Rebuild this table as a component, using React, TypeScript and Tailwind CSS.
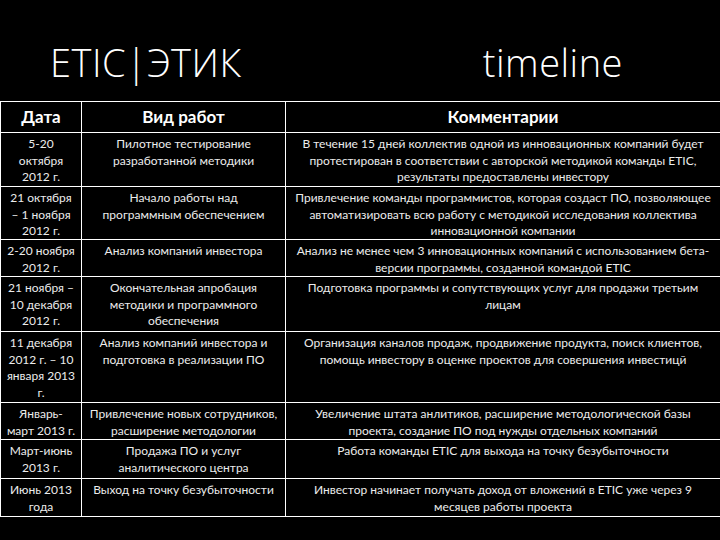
import React from "react";

type Row = { h: string; d: string[]; w: string[]; c: string[] };

const rows: Row[] = [
  {
    h: "h-[54px]",
    d: ["5-20", "октября", "2012 г."],
    w: ["Пилотное тестирование", "разработанной методики"],
    c: [
      "В течение 15 дней коллектив одной из инновационных компаний будет",
      "протестирован в соответствии с авторской методикой команды ETIC,",
      "результаты предоставлены инвестору",
    ],
  },
  {
    h: "h-[53px]",
    d: ["21 октября", "– 1 ноября", "2012 г."],
    w: ["Начало работы над", "программным обеспечением"],
    c: [
      "Привлечение команды программистов, которая создаст ПО, позволяющее",
      "автоматизировать всю работу с методикой исследования коллектива",
      "инновационной компании",
    ],
  },
  {
    h: "h-[37px]",
    d: ["2-20 ноября", "2012 г."],
    w: ["Анализ компаний инвестора"],
    c: [
      "Анализ не менее чем 3 инновационных компаний с использованием бета-",
      "версии программы, созданной командой ETIC",
    ],
  },
  {
    h: "h-[55px]",
    d: ["21 ноября –", "10 декабря", "2012 г."],
    w: ["Окончательная апробация", "методики и программного", "обеспечения"],
    c: ["Подготовка программы и сопутствующих услуг для продажи третьим", "лицам"],
  },
  {
    h: "h-[71px]",
    d: ["11 декабря", "2012 г. – 10", "января 2013", "г."],
    w: ["Анализ компаний инвестора и", "подготовка в реализации ПО"],
    c: [
      "Организация каналов продаж, продвижение продукта, поиск клиентов,",
      "помощь инвестору в оценке проектов для совершения инвестицй",
    ],
  },
  {
    h: "h-[37px]",
    d: ["Январь-", "март 2013 г."],
    w: ["Привлечение новых сотрудников,", "расширение методологии"],
    c: [
      "Увеличение штата анлитиков, расширение методологической базы",
      "проекта, создание ПО под нужды отдельных компаний",
    ],
  },
  {
    h: "h-[39px]",
    d: ["Март-июнь", "2013 г."],
    w: ["Продажа ПО и услуг", "аналитического центра"],
    c: ["Работа команды ETIC для выхода на точку безубыточности"],
  },
  {
    h: "h-[38px]",
    d: ["Июнь 2013", "года"],
    w: ["Выход на точку безубыточности"],
    c: [
      "Инвестор начинает получать доход от вложений в ETIC уже через 9",
      "месяцев работы проекта",
    ],
  },
];

function Lines({ lines }: { lines: string[] }) {
  return (
    <>
      {lines.map((l, i) => (
        <div key={i} className="whitespace-nowrap">
          {l}
        </div>
      ))}
    </>
  );
}

export default function App() {
  return (
    <div
      className="w-[720px] h-[540px] bg-black text-[#ececec] overflow-hidden"
      style={{ fontFamily: "Lato, 'Noto Sans', sans-serif" }}
    >
      <div
        className="h-[101px] flex items-start pt-[43px] text-white font-light text-[38px] leading-none"
        style={{ fontFamily: "'Open Sans', sans-serif" }}
      >
        <div className="pl-[50px] tracking-[0.5px]">ETIC|ЭТИК</div>
        <div className="ml-auto pr-[97px] tracking-[0.5px]">timeline</div>
      </div>
      <div className="border-t border-white">
        <div className="flex h-[31px] border-b border-white font-bold text-[17px] text-white">
          <div className="w-[82px] border-l border-r border-white flex items-center justify-center">Дата</div>
          <div className="w-[204px] border-r border-white flex items-center justify-center">Вид работ</div>
          <div className="flex-1 flex items-center justify-center">Комментарии</div>
        </div>
        {rows.map((r, i) => (
          <div key={i} className={`flex ${r.h} border-b border-white text-[12px] leading-[16.5px]`}>
            <div className="w-[82px] border-l border-r border-white text-center pt-[3px] flex flex-col items-center">
              <Lines lines={r.d} />
            </div>
            <div className="w-[204px] border-r border-white text-center pt-[3px] flex flex-col items-center">
              <Lines lines={r.w} />
            </div>
            <div className="flex-1 text-center pt-[3px] flex flex-col items-center">
              <Lines lines={r.c} />
            </div>
          </div>
        ))}
      </div>
    </div>
  );
}
